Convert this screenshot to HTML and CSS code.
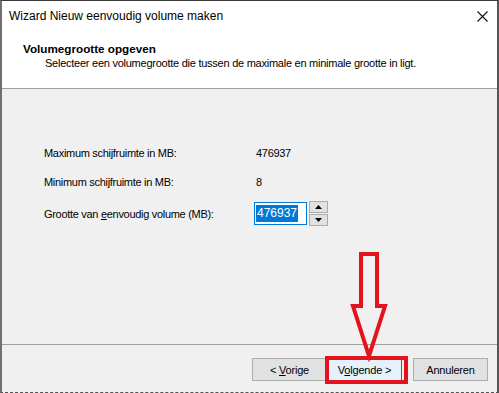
FILE: index.html
```html
<!DOCTYPE html>
<html lang="nl">
<head>
  <meta charset="UTF-8">
  <title>Wizard Nieuw eenvoudig volume maken</title>
  <link rel="stylesheet" href="styles.css">
</head>
<body>

  <div class="window">

    <!-- titelbalk -->
    <div class="titlebar">
      <span class="title">Wizard Nieuw eenvoudig volume maken</span>
      <svg class="close" width="11" height="11" viewBox="0 0 11 11">
        <path d="M0.5 0.5 L10.5 10.5 M10.5 0.5 L0.5 10.5" stroke="#111" stroke-width="1.1" fill="none"/>
      </svg>
    </div>

    <!-- kop -->
    <div class="header">
      <h1>Volumegrootte opgeven</h1>
      <p>Selecteer een volumegrootte die tussen de maximale en minimale grootte in ligt.</p>
    </div>

    <!-- inhoud -->
    <div class="content">
      <div class="row">
        <span class="label">Maximum schijfruimte in MB:</span>
        <span class="value">476937</span>
      </div>
      <div class="row">
        <span class="label">Minimum schijfruimte in MB:</span>
        <span class="value">8</span>
      </div>
      <div class="row row-input">
        <span class="label">Grootte van <u>e</u>envoudig volume (MB):</span>
        <div class="spinner">
          <div class="spin-input"><span class="selected">476937</span></div>
          <div class="spin-buttons">
            <div class="spin-btn">
              <svg width="7" height="4" viewBox="0 0 7 4"><path d="M3.5 0 L7 4 L0 4 Z" fill="#000"/></svg>
            </div>
            <div class="spin-btn">
              <svg width="7" height="4" viewBox="0 0 7 4"><path d="M0 0 L7 0 L3.5 4 Z" fill="#000"/></svg>
            </div>
          </div>
        </div>
      </div>
    </div>

    <!-- knoppen -->
    <div class="footer">
      <button class="btn">&lt; <u>V</u>orige</button>
      <button class="btn btn-default">V<u>o</u>lgende &gt;</button>
      <button class="btn btn-cancel">Annuleren</button>
    </div>

    <!-- rode markering -->
    <svg class="arrow" width="42" height="112" viewBox="0 0 42 112">
      <path d="M12 4 L28 4 L28 56 L36 56 L20 106 L4 56 L12 56 Z" fill="none" stroke="#e4121c" stroke-width="4" stroke-linejoin="miter"/>
    </svg>
    <div class="highlight"></div>

  </div>

</body>
</html>
```

FILE: styles.css
```css
body {
  margin: 0;
  font-family: 'Liberation Sans', Arial, sans-serif;
  font-size: 12px;
  color: #000;
  background-color: #f0f0f0;
}

.window {
  position: relative;
  width: 499px;
  height: 393px;
  box-sizing: border-box;
  border-top: 1px solid #3a3a3a;
  border-left: 2px solid #707070;
  border-right: 2px solid #555;
  border-bottom: 1px dashed #555;
  background-color: #f0f0f0;
  display: flex;
  flex-direction: column;
  overflow: hidden;
}

.titlebar {
  background-color: #fff;
  height: 30px;
  display: flex;
  align-items: center;
  justify-content: space-between;
  padding: 0 9px 0 7px;
}

.title {
  font-size: 12px;
  color: #000;
}

.close {
  display: block;
}

.header {
  background-color: #fff;
  height: 58px;
  border-bottom: 1px solid #a0a0a0;
  padding: 11px 0 0 21px;
  box-sizing: border-box;
}

.header h1 {
  margin: 0;
  font-size: 11.7px;
  font-weight: bold;
  line-height: 14px;
}

.header p {
  margin: 0 0 0 22px;
  font-size: 11px;
  letter-spacing: -0.25px;
  line-height: 14px;
}

.content {
  flex: 1;
  padding: 49px 0 0 42px;
  border-bottom: 1px solid #a0a0a0;
}

.row {
  display: flex;
  align-items: center;
  height: 29px;
  font-size: 11px;
  letter-spacing: -0.3px;
}

.row-input {
  height: 27px;
  margin-top: 4px;
}

.row .label {
  width: 212px;
}

.spinner {
  display: flex;
  align-items: center;
  gap: 2px;
  margin-left: -2px;
  letter-spacing: 0;
}

.spin-input {
  width: 50px;
  height: 21px;
  border: 1px solid #0078d7;
  background-color: #fff;
  display: flex;
  align-items: center;
  padding-left: 1px;
  font-size: 12px;
}

.selected {
  background-color: #0078d7;
  color: #fff;
  padding: 1px 1px 2px;
}

.spin-buttons {
  display: flex;
  flex-direction: column;
  gap: 1px;
}

.spin-btn {
  width: 17px;
  height: 10px;
  border: 1px solid #adadad;
  background-color: #e1e1e1;
  display: flex;
  align-items: center;
  justify-content: center;
}

.footer {
  height: 47px;
  display: flex;
  align-items: flex-start;
  padding: 13px 0 0 250px;
  box-sizing: border-box;
}

.btn {
  width: 75px;
  height: 23px;
  font-family: 'Liberation Sans', Arial, sans-serif;
  font-size: 11px;
  letter-spacing: -0.2px;
  background-color: #e1e1e1;
  border: 1px solid #adadad;
  color: #000;
  padding: 0;
  margin: 0;
}

.btn-default {
  background-color: #e5f1fb;
  border-color: #0078d7;
}

.btn-cancel {
  margin-left: 11px;
}

.arrow {
  position: absolute;
  left: 347px;
  top: 249px;
}

.highlight {
  position: absolute;
  left: 323px;
  top: 355px;
  width: 83px;
  height: 28px;
  box-sizing: border-box;
  border: 4px solid #e4121c;
}
```
